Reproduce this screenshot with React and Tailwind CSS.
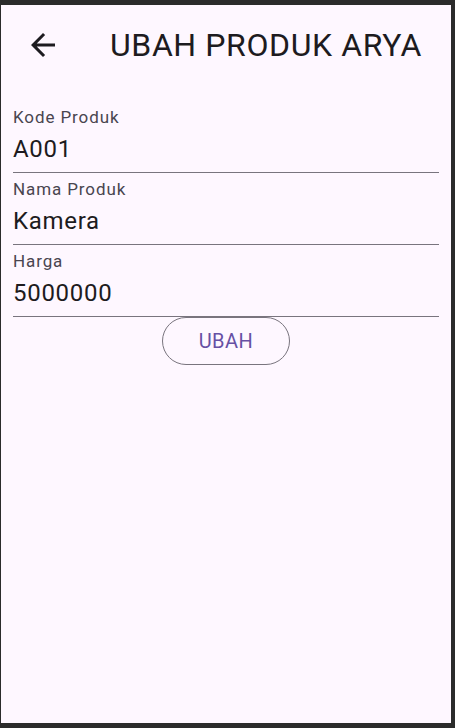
import React from 'react';

const fields = [
  { label: 'Kode Produk', value: 'A001' },
  { label: 'Nama Produk', value: 'Kamera' },
  { label: 'Harga', value: '5000000' },
];

const Field = ({ label, value }) => (
  <div className="pt-[6px] border-b border-[#79747e]">
    <div className="text-[17px] leading-[20px] tracking-[0.9px] text-[#49454f]">{label}</div>
    <div className="mt-[6px] mb-[7px] text-[24px] leading-[32px] tracking-[0.7px] text-[#1d1b20]">{value}</div>
  </div>
);

export default function App() {
  return (
    <div
      className="h-screen w-full bg-[#2b2b2b] pt-[5px] pl-[1px] pr-[4px] pb-[5px]"
      style={{ fontFamily: 'Roboto, "Noto Sans", sans-serif' }}
    >
      <div className="h-full bg-[#fef7ff] flex flex-col">
        <header className="h-[80px] flex items-center pl-[30px]">
          <svg width="24" height="24" viewBox="4 4 16 16" fill="#1d1b20">
            <path d="M20 11H7.83l5.59-5.59L12 4l-8 8 8 8 1.41-1.41L7.83 13H20v-2z" />
          </svg>
          <h1 className="ml-[55px] text-[32px] leading-[40px] tracking-[0.6px] text-[#1d1b20] font-normal">
            UBAH PRODUK ARYA
          </h1>
        </header>

        <div className="pt-[16px] px-[12px] flex flex-col">
          {fields.map((f) => (
            <Field key={f.label} label={f.label} value={f.value} />
          ))}
          <div className="flex justify-center">
            <button className="w-[128px] h-[48px] rounded-full border border-[#79747e] text-[20px] tracking-[0.5px] text-[#6750a4]">
              UBAH
            </button>
          </div>
        </div>
      </div>
    </div>
  );
}
